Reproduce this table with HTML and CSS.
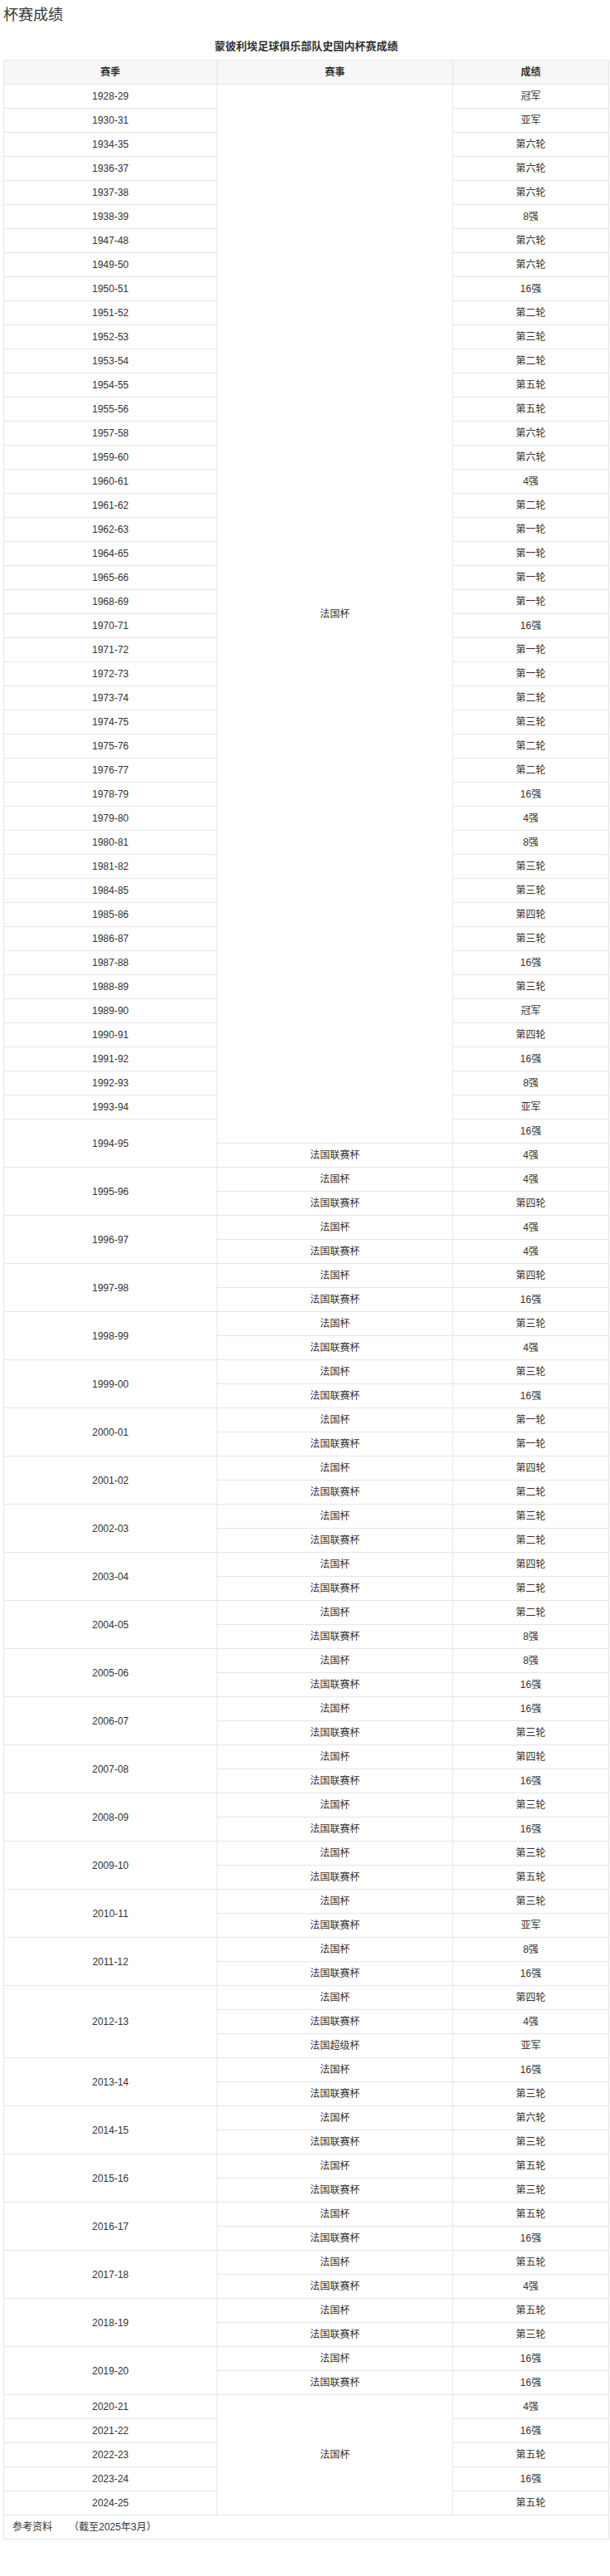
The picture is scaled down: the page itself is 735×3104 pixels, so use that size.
FILE: index.html
```html
<!DOCTYPE html>
<html lang="zh-CN">
<head>
<meta charset="utf-8">
<title>杯赛成绩</title>
<link rel="stylesheet" href="styles.css">
</head>
<body>
<h2 class="title">杯赛成绩</h2>
<table class="cup">
<caption>蒙彼利埃足球俱乐部队史国内杯赛成绩</caption>
<colgroup><col class="c1"><col class="c2"><col class="c3"></colgroup>
<thead>
<tr><th>赛季</th><th>赛事</th><th>成绩</th></tr>
</thead>
<tbody>
<tr><td>1928-29</td><td rowspan="44">法国杯</td><td>冠军</td></tr>
<tr><td>1930-31</td><td>亚军</td></tr>
<tr><td>1934-35</td><td>第六轮</td></tr>
<tr><td>1936-37</td><td>第六轮</td></tr>
<tr><td>1937-38</td><td>第六轮</td></tr>
<tr><td>1938-39</td><td>8强</td></tr>
<tr><td>1947-48</td><td>第六轮</td></tr>
<tr><td>1949-50</td><td>第六轮</td></tr>
<tr><td>1950-51</td><td>16强</td></tr>
<tr><td>1951-52</td><td>第二轮</td></tr>
<tr><td>1952-53</td><td>第三轮</td></tr>
<tr><td>1953-54</td><td>第二轮</td></tr>
<tr><td>1954-55</td><td>第五轮</td></tr>
<tr><td>1955-56</td><td>第五轮</td></tr>
<tr><td>1957-58</td><td>第六轮</td></tr>
<tr><td>1959-60</td><td>第六轮</td></tr>
<tr><td>1960-61</td><td>4强</td></tr>
<tr><td>1961-62</td><td>第二轮</td></tr>
<tr><td>1962-63</td><td>第一轮</td></tr>
<tr><td>1964-65</td><td>第一轮</td></tr>
<tr><td>1965-66</td><td>第一轮</td></tr>
<tr><td>1968-69</td><td>第一轮</td></tr>
<tr><td>1970-71</td><td>16强</td></tr>
<tr><td>1971-72</td><td>第一轮</td></tr>
<tr><td>1972-73</td><td>第一轮</td></tr>
<tr><td>1973-74</td><td>第二轮</td></tr>
<tr><td>1974-75</td><td>第三轮</td></tr>
<tr><td>1975-76</td><td>第二轮</td></tr>
<tr><td>1976-77</td><td>第二轮</td></tr>
<tr><td>1978-79</td><td>16强</td></tr>
<tr><td>1979-80</td><td>4强</td></tr>
<tr><td>1980-81</td><td>8强</td></tr>
<tr><td>1981-82</td><td>第三轮</td></tr>
<tr><td>1984-85</td><td>第三轮</td></tr>
<tr><td>1985-86</td><td>第四轮</td></tr>
<tr><td>1986-87</td><td>第三轮</td></tr>
<tr><td>1987-88</td><td>16强</td></tr>
<tr><td>1988-89</td><td>第三轮</td></tr>
<tr><td>1989-90</td><td>冠军</td></tr>
<tr><td>1990-91</td><td>第四轮</td></tr>
<tr><td>1991-92</td><td>16强</td></tr>
<tr><td>1992-93</td><td>8强</td></tr>
<tr><td>1993-94</td><td>亚军</td></tr>
<tr><td rowspan="2">1994-95</td><td>16强</td></tr>
<tr><td>法国联赛杯</td><td>4强</td></tr>
<tr><td rowspan="2">1995-96</td><td>法国杯</td><td>4强</td></tr>
<tr><td>法国联赛杯</td><td>第四轮</td></tr>
<tr><td rowspan="2">1996-97</td><td>法国杯</td><td>4强</td></tr>
<tr><td>法国联赛杯</td><td>4强</td></tr>
<tr><td rowspan="2">1997-98</td><td>法国杯</td><td>第四轮</td></tr>
<tr><td>法国联赛杯</td><td>16强</td></tr>
<tr><td rowspan="2">1998-99</td><td>法国杯</td><td>第三轮</td></tr>
<tr><td>法国联赛杯</td><td>4强</td></tr>
<tr><td rowspan="2">1999-00</td><td>法国杯</td><td>第三轮</td></tr>
<tr><td>法国联赛杯</td><td>16强</td></tr>
<tr><td rowspan="2">2000-01</td><td>法国杯</td><td>第一轮</td></tr>
<tr><td>法国联赛杯</td><td>第一轮</td></tr>
<tr><td rowspan="2">2001-02</td><td>法国杯</td><td>第四轮</td></tr>
<tr><td>法国联赛杯</td><td>第二轮</td></tr>
<tr><td rowspan="2">2002-03</td><td>法国杯</td><td>第三轮</td></tr>
<tr><td>法国联赛杯</td><td>第二轮</td></tr>
<tr><td rowspan="2">2003-04</td><td>法国杯</td><td>第四轮</td></tr>
<tr><td>法国联赛杯</td><td>第二轮</td></tr>
<tr><td rowspan="2">2004-05</td><td>法国杯</td><td>第二轮</td></tr>
<tr><td>法国联赛杯</td><td>8强</td></tr>
<tr><td rowspan="2">2005-06</td><td>法国杯</td><td>8强</td></tr>
<tr><td>法国联赛杯</td><td>16强</td></tr>
<tr><td rowspan="2">2006-07</td><td>法国杯</td><td>16强</td></tr>
<tr><td>法国联赛杯</td><td>第三轮</td></tr>
<tr><td rowspan="2">2007-08</td><td>法国杯</td><td>第四轮</td></tr>
<tr><td>法国联赛杯</td><td>16强</td></tr>
<tr><td rowspan="2">2008-09</td><td>法国杯</td><td>第三轮</td></tr>
<tr><td>法国联赛杯</td><td>16强</td></tr>
<tr><td rowspan="2">2009-10</td><td>法国杯</td><td>第三轮</td></tr>
<tr><td>法国联赛杯</td><td>第五轮</td></tr>
<tr><td rowspan="2">2010-11</td><td>法国杯</td><td>第三轮</td></tr>
<tr><td>法国联赛杯</td><td>亚军</td></tr>
<tr><td rowspan="2">2011-12</td><td>法国杯</td><td>8强</td></tr>
<tr><td>法国联赛杯</td><td>16强</td></tr>
<tr><td rowspan="3">2012-13</td><td>法国杯</td><td>第四轮</td></tr>
<tr><td>法国联赛杯</td><td>4强</td></tr>
<tr><td>法国超级杯</td><td>亚军</td></tr>
<tr><td rowspan="2">2013-14</td><td>法国杯</td><td>16强</td></tr>
<tr><td>法国联赛杯</td><td>第三轮</td></tr>
<tr><td rowspan="2">2014-15</td><td>法国杯</td><td>第六轮</td></tr>
<tr><td>法国联赛杯</td><td>第三轮</td></tr>
<tr><td rowspan="2">2015-16</td><td>法国杯</td><td>第五轮</td></tr>
<tr><td>法国联赛杯</td><td>第三轮</td></tr>
<tr><td rowspan="2">2016-17</td><td>法国杯</td><td>第五轮</td></tr>
<tr><td>法国联赛杯</td><td>16强</td></tr>
<tr><td rowspan="2">2017-18</td><td>法国杯</td><td>第五轮</td></tr>
<tr><td>法国联赛杯</td><td>4强</td></tr>
<tr><td rowspan="2">2018-19</td><td>法国杯</td><td>第五轮</td></tr>
<tr><td>法国联赛杯</td><td>第三轮</td></tr>
<tr><td rowspan="2">2019-20</td><td>法国杯</td><td>16强</td></tr>
<tr><td>法国联赛杯</td><td>16强</td></tr>
<tr><td>2020-21</td><td rowspan="5">法国杯</td><td>4强</td></tr>
<tr><td>2021-22</td><td>16强</td></tr>
<tr><td>2022-23</td><td>第五轮</td></tr>
<tr><td>2023-24</td><td>16强</td></tr>
<tr><td>2024-25</td><td>第五轮</td></tr>
<tr><td colspan="3" class="ref">参考资料<span class="note">（截至2025年3月）</span></td></tr>
</tbody>
</table>
</body>
</html>
```
FILE: styles.css
```css
html, body {
  margin: 0;
  padding: 0;
  background: #fff;
}
body {
  padding: 0 2px 0 4px;
  font-family: "Liberation Sans", "Noto Sans CJK SC", sans-serif;
  color: #333;
  font-size: 12px;
}
.title {
  margin: 6px 0 0;
  font-size: 18px;
  line-height: 24px;
  font-weight: normal;
  color: #333;
}
.cup {
  width: 729px;
  border-collapse: collapse;
  table-layout: fixed;
}
.cup caption {
  padding: 17px 0 7px;
  font-size: 13px;
  line-height: 18px;
  font-weight: bold;
  color: #333;
  text-align: center;
}
.c1 { width: 257px; }
.c2 { width: 284px; }
.c3 { width: 188px; }
.cup th,
.cup td {
  border: 1px solid #e6e6e6;
  height: 28px;
  padding: 0 8px;
  line-height: 28px;
  text-align: center;
  vertical-align: middle;
  font-size: 12px;
  color: #333;
}
.cup th {
  background: #f7f7f7;
  font-weight: bold;
  color: #333;
}
.cup td.ref {
  text-align: left;
  padding-left: 10px;
}
.note {
  margin-left: 20px;
}
```
